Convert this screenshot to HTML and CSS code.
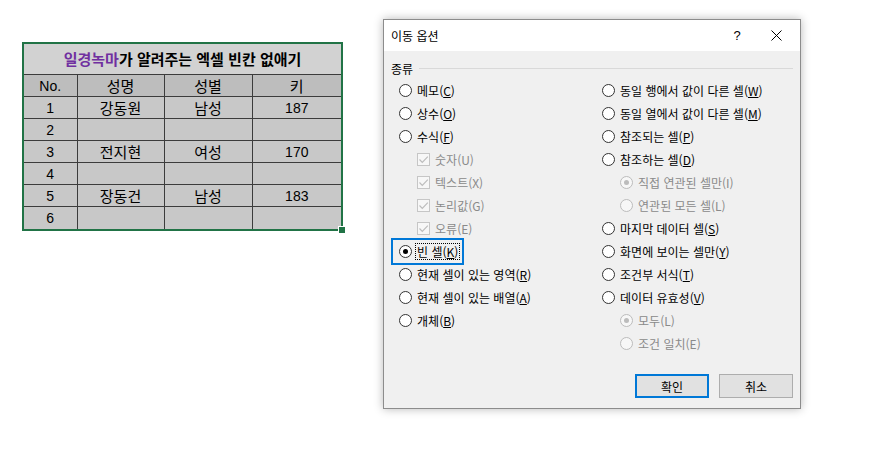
FILE: index.html
```html
<!DOCTYPE html>
<html lang="ko">
<head>
  <meta charset="UTF-8">
  <title>이동 옵션</title>
  <link rel="stylesheet" href="styles.css">
</head>
<body>
  <div class="sheet">
    <table class="grid">
      <colgroup>
        <col class="c-no"><col class="c-name"><col class="c-sex"><col class="c-ht">
      </colgroup>
      <tr class="title-row">
        <td colspan="4"><span class="accent">일경녹마</span>가 알려주는 엑셀 빈칸 없애기</td>
      </tr>
      <tr class="head-row">
        <td class="num">No.</td><td>성명</td><td>성별</td><td>키</td>
      </tr>
      <tr><td class="num">1</td><td>강동원</td><td>남성</td><td class="num">187</td></tr>
      <tr><td class="num">2</td><td></td><td></td><td></td></tr>
      <tr><td class="num">3</td><td>전지현</td><td>여성</td><td class="num">170</td></tr>
      <tr><td class="num">4</td><td></td><td></td><td></td></tr>
      <tr><td class="num">5</td><td>장동건</td><td>남성</td><td class="num">183</td></tr>
      <tr><td class="num">6</td><td></td><td></td><td></td></tr>
    </table>
    <span class="fill-handle"></span>
  </div>

  <div class="dialog">
    <div class="titlebar">
      <span class="title">이동 옵션</span>
      <span class="help">?</span>
      <span class="close">
        <svg width="11" height="11" viewBox="0 0 11 11"><path d="M0.5 0.5 L10.5 10.5 M10.5 0.5 L0.5 10.5" stroke="#000" stroke-width="1" fill="none"/></svg>
      </span>
    </div>

    <div class="dialog-body">
      <div class="group-head"><span>종류</span><span class="rule"></span></div>

      <div class="options">
        <div class="col">
          <div class="item"><span class="radio"></span><span>메모(<u>C</u>)</span></div>
          <div class="item"><span class="radio"></span><span>상수(<u>O</u>)</span></div>
          <div class="item"><span class="radio"></span><span>수식(<u>F</u>)</span></div>
          <div class="item sub off"><span class="check"><svg width="11" height="11" viewBox="0 0 11 11"><path d="M1.5 5.5 L4.3 8.3 L9.8 2.6" stroke="#bdbdbd" stroke-width="1.2" fill="none"/></svg></span><span>숫자(U)</span></div>
          <div class="item sub off"><span class="check"><svg width="11" height="11" viewBox="0 0 11 11"><path d="M1.5 5.5 L4.3 8.3 L9.8 2.6" stroke="#bdbdbd" stroke-width="1.2" fill="none"/></svg></span><span>텍스트(X)</span></div>
          <div class="item sub off"><span class="check"><svg width="11" height="11" viewBox="0 0 11 11"><path d="M1.5 5.5 L4.3 8.3 L9.8 2.6" stroke="#bdbdbd" stroke-width="1.2" fill="none"/></svg></span><span>논리값(G)</span></div>
          <div class="item sub off"><span class="check"><svg width="11" height="11" viewBox="0 0 11 11"><path d="M1.5 5.5 L4.3 8.3 L9.8 2.6" stroke="#bdbdbd" stroke-width="1.2" fill="none"/></svg></span><span>오류(E)</span></div>
          <div class="item focused"><span class="radio on"></span><span class="focus-text">빈 셀(<u>K</u>)</span></div>
          <div class="item"><span class="radio"></span><span>현재 셀이 있는 영역(<u>R</u>)</span></div>
          <div class="item"><span class="radio"></span><span>현재 셀이 있는 배열(<u>A</u>)</span></div>
          <div class="item"><span class="radio"></span><span>개체(<u>B</u>)</span></div>
        </div>
        <div class="col">
          <div class="item"><span class="radio"></span><span>동일 행에서 값이 다른 셀(<u>W</u>)</span></div>
          <div class="item"><span class="radio"></span><span>동일 열에서 값이 다른 셀(<u>M</u>)</span></div>
          <div class="item"><span class="radio"></span><span>참조되는 셀(<u>P</u>)</span></div>
          <div class="item"><span class="radio"></span><span>참조하는 셀(<u>D</u>)</span></div>
          <div class="item sub off"><span class="radio on"></span><span>직접 연관된 셀만(I)</span></div>
          <div class="item sub off"><span class="radio"></span><span>연관된 모든 셀(L)</span></div>
          <div class="item"><span class="radio"></span><span>마지막 데이터 셀(<u>S</u>)</span></div>
          <div class="item"><span class="radio"></span><span>화면에 보이는 셀만(<u>Y</u>)</span></div>
          <div class="item"><span class="radio"></span><span>조건부 서식(<u>T</u>)</span></div>
          <div class="item"><span class="radio"></span><span>데이터 유효성(<u>V</u>)</span></div>
          <div class="item sub off"><span class="radio on"></span><span>모두(L)</span></div>
          <div class="item sub off"><span class="radio"></span><span>조건 일치(E)</span></div>
        </div>
      </div>

      <div class="buttons">
        <button class="btn primary">확인</button>
        <button class="btn">취소</button>
      </div>
    </div>
  </div>
</body>
</html>
```

FILE: styles.css
```css
body {
  margin: 0;
  width: 885px;
  height: 454px;
  background: #fff;
  display: flex;
  align-items: flex-start;
  font-family: "Noto Sans CJK KR", "Noto Sans", sans-serif;
  color: #000;
  overflow: hidden;
}

/* 엑셀 시트 */
.sheet {
  position: relative;
  margin: 42px 0 0 22px;
  border: 2px solid #217346;
}

.grid {
  border-collapse: collapse;
  table-layout: fixed;
  width: 317px;
  font-size: 15px;
}

.c-no { width: 53px; }
.c-name { width: 87px; }
.c-sex { width: 88px; }
.c-ht { width: 89px; }

.grid td {
  height: 21px;
  padding: 0;
  border: 1px solid #3c3c3c;
  background: #c8c8c8;
  text-align: center;
  line-height: 20px;
  white-space: nowrap;
}

.grid tr:first-child td { border-top: none; }
.grid td:first-child { border-left: none; }
.grid td:last-child { border-right: none; }
.grid tr:last-child td { border-bottom: none; height: 22px; }

.grid .title-row td {
  height: 30px;
  background: #d2d2d2;
  font-weight: bold;
}

.grid .head-row td {
  background: #bdbdbd;
}

.grid .num {
  font-family: "Liberation Sans", Arial, sans-serif;
  font-size: 14px;
}

.accent { color: #7030a0; }

.fill-handle {
  position: absolute;
  right: -5px;
  bottom: -5px;
  width: 6px;
  height: 6px;
  background: #217346;
  border: 1px solid #fff;
}

/* 이동 옵션 대화상자 */
.dialog {
  margin: 19px 0 0 40px;
  width: 418px;
  box-sizing: border-box;
  border: 1px solid #8c8c8c;
  background: #f0f0f0;
  box-shadow: 0 0 9px rgba(0, 0, 0, 0.28);
  font-size: 12px;
}

.titlebar {
  height: 31px;
  background: #fff;
  display: flex;
  align-items: center;
  padding-left: 7px;
}

.title { flex: 1; }

.help {
  width: 20px;
  text-align: center;
  margin-right: 24px;
  font-family: "Liberation Sans", Arial, sans-serif;
  font-size: 13px;
}

.close {
  display: flex;
  margin-right: 18px;
}

.dialog-body {
  padding: 8px 7px 10px 7px;
}

.group-head {
  display: flex;
  align-items: center;
  height: 18px;
  gap: 6px;
}

.rule {
  flex: 1;
  height: 1px;
  background: #d9d9d9;
}

.options {
  display: grid;
  grid-template-columns: 203px 1fr;
  margin-top: 2px;
  padding-left: 8px;
}

.item {
  display: flex;
  align-items: center;
  height: 23px;
  gap: 5px;
  white-space: nowrap;
}

.item.sub { padding-left: 18px; }
.item.off { color: #8a8a8a; }

.radio {
  position: relative;
  width: 13px;
  height: 13px;
  box-sizing: border-box;
  border: 1px solid #333;
  border-radius: 50%;
  background: #fff;
  flex: none;
}

.radio.on::after {
  content: "";
  position: absolute;
  left: 3px;
  top: 3px;
  width: 5px;
  height: 5px;
  border-radius: 50%;
  background: #000;
}

.off .radio {
  border-color: #bcbcbc;
  background: #f7f7f7;
}

.off .radio.on::after { background: #bcbcbc; }

.check {
  display: flex;
  align-items: center;
  justify-content: center;
  width: 13px;
  height: 13px;
  box-sizing: border-box;
  border: 1px solid #c6c6c6;
  background: #f7f7f7;
  flex: none;
}

.item.focused {
  width: fit-content;
  margin-left: -6px;
  padding: 0 2px 0 6px;
  outline: 2px solid #0078d7;
  gap: 3px;
}

.focus-text {
  border: 1px dotted #000;
  padding: 0 1px;
  line-height: 15px;
}

.buttons {
  display: flex;
  justify-content: flex-end;
  gap: 10px;
  margin-top: 19px;
}

.btn {
  width: 74px;
  height: 24px;
  box-sizing: border-box;
  border: 1px solid #adadad;
  background: #e1e1e1;
  font-family: inherit;
  font-size: 12px;
  padding: 0;
}

.btn.primary {
  border: 2px solid #0078d7;
}
```
